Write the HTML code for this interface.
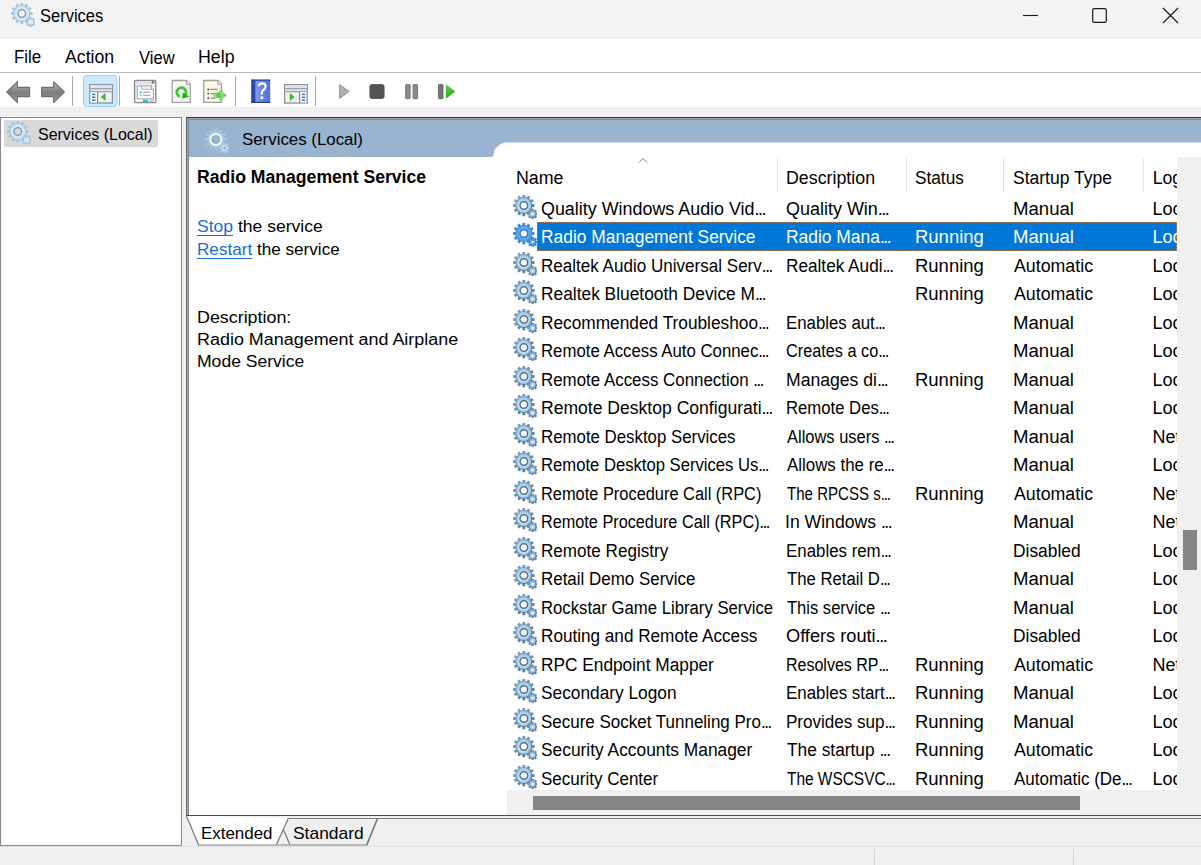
<!DOCTYPE html>
<html><head><meta charset="utf-8">
<style>
*{margin:0;padding:0;box-sizing:border-box}
html,body{width:1201px;height:865px;overflow:hidden;background:#f0f0f0;font-family:"Liberation Sans",sans-serif;color:#000;position:relative}
.a{position:absolute}
.t{position:absolute;white-space:nowrap;font-size:17.2px;line-height:20px}
#title{left:0;top:0;width:1201px;height:39px;background:#f3f3f3}
#menu{left:0;top:39px;width:1201px;height:33px;background:#fff}
#menuline{left:0;top:72px;width:1201px;height:1px;background:#b9b9b9}
#tool{left:0;top:73px;width:1201px;height:34px;background:#fff}
.mi{font-size:17.4px;line-height:20px;top:47px}
#lp{left:0;top:117px;width:182px;height:729px;background:#fff;border:1px solid #838a95}
#frame{left:186px;top:117px;width:1015px;height:699px;background:#fff;border-top:1px solid #3a3a3a;border-left:1px solid #6b6b6b;border-bottom:1px solid #3c3c3c}
#frame2{left:187px;top:118px;width:1014px;height:697px;border-top:1px solid #a0a0a0;border-left:1px solid #a0a0a0}
#frame3{left:188px;top:119px;width:1013px;height:696px;border-top:1px solid #7f8b99;border-left:1px solid #7f8b99}
#hdr{left:189px;top:120px;width:1012px;height:37px;background:#99b4d1}
#wtab{left:494px;top:142.5px;width:707px;height:15.5px;background:#fff;border-top-left-radius:11px 14px}
.row{position:absolute;left:507px;width:670px;height:28.5px;font-size:18px;line-height:28.5px;white-space:nowrap;overflow:hidden}
.row span{position:absolute;top:0;transform-origin:0 0}
.el{font-style:normal;letter-spacing:-1.5px}
.gi{position:absolute;left:6px;top:0}
.selbg{position:absolute;left:537px;top:222px;width:640px;height:29px;background:#0078d7;border:1px dotted #a9876a}
.sel{color:#fff}
.c1{left:33.5px}.c2{left:279px}.c3{left:408px}.c4{left:505px}.c5{left:645px}
.hd{position:absolute;top:163px;font-size:17.3px;line-height:20px;white-space:nowrap}
.sep{position:absolute;top:158px;width:1px;height:35px;background:#e5e5e5}
#vs{left:1177px;top:157px;width:24px;height:658px;background:#f0f0f0}
#vthumb{left:1183px;top:530px;width:14px;height:40px;background:#858585}
#hs{left:507px;top:790px;width:694px;height:25px;background:#f0f0f0}
#hthumb{left:533px;top:796px;width:547px;height:14px;background:#858585}
.dt{position:absolute;font-size:17.3px;line-height:22.4px;white-space:nowrap;left:197px}
.lnk{color:#1a6dd4;text-decoration:underline;text-decoration-skip-ink:none;text-underline-offset:2.5px}
#status{left:0;top:846px;width:1201px;height:1px;background:#e2e2e2}
.ssep{position:absolute;top:849px;width:1px;height:16px;background:#d5d5d5}
.tx{position:absolute;white-space:nowrap;line-height:40px;height:40px;transform-origin:0 0}

</style></head><body>
<svg width="0" height="0" style="position:absolute">
<defs>
<linearGradient id="tg" x1="0" y1="0" x2="0.8" y2="1"><stop offset="0" stop-color="#86a8c9"/><stop offset="1" stop-color="#56789c"/></linearGradient>
<radialGradient id="rg" cx="0.45" cy="0.55" r="0.55"><stop offset="0.5" stop-color="#d6f1fb"/><stop offset="1" stop-color="#a5cde6"/></radialGradient>
<symbol id="g" viewBox="0 0 24 24">
<path d="M9.29,2.13 L9.39,-0.21 L12.21,-0.21 L12.31,2.13 L13.68,2.50 L14.93,0.52 L17.37,1.93 L16.29,4.01 L17.29,5.01 L19.37,3.93 L20.78,6.37 L18.80,7.62 L19.17,8.99 L21.51,9.09 L21.51,11.91 L19.17,12.01 L18.80,13.38 L20.78,14.63 L19.37,17.07 L17.29,15.99 L16.29,16.99 L17.37,19.07 L14.93,20.48 L13.68,18.50 L12.31,18.87 L12.21,21.21 L9.39,21.21 L9.29,18.87 L7.92,18.50 L6.67,20.48 L4.23,19.07 L5.31,16.99 L4.31,15.99 L2.23,17.07 L0.82,14.63 L2.80,13.38 L2.43,12.01 L0.09,11.91 L0.09,9.09 L2.43,8.99 L2.80,7.62 L0.82,6.37 L2.23,3.93 L4.31,5.01 L5.31,4.01 L4.23,1.93 L6.67,0.52 L7.92,2.50Z" fill="url(#tg)"/>
<circle cx="10.8" cy="10.5" r="5.7" fill="none" stroke="url(#rg)" stroke-width="3.4"/>
<circle cx="10.8" cy="10.5" r="3.8" fill="none" stroke="#55718f" stroke-width="1.4"/>
<circle cx="10.8" cy="10.5" r="3.0" style="fill:var(--hole,#fff)"/>
<path d="M18.52,15.05 L18.55,13.70 L20.65,13.70 L20.68,15.05 L21.63,15.44 L22.60,14.51 L24.09,16.00 L23.16,16.97 L23.55,17.92 L24.90,17.95 L24.90,20.05 L23.55,20.08 L23.16,21.03 L24.09,22.00 L22.60,23.49 L21.63,22.56 L20.68,22.95 L20.65,24.30 L18.55,24.30 L18.52,22.95 L17.57,22.56 L16.60,23.49 L15.11,22.00 L16.04,21.03 L15.65,20.08 L14.30,20.05 L14.30,17.95 L15.65,17.92 L16.04,16.97 L15.11,16.00 L16.60,14.51 L17.57,15.44Z" fill="url(#tg)"/>
<circle cx="19.6" cy="19" r="2.7" fill="#a9cbe3"/>
<circle cx="19.6" cy="19" r="1.1" style="fill:var(--hole,#fff)"/>
</symbol>
<symbol id="gs" viewBox="0 0 24 24">
<path d="M9.29,2.13 L9.39,-0.21 L12.21,-0.21 L12.31,2.13 L13.68,2.50 L14.93,0.52 L17.37,1.93 L16.29,4.01 L17.29,5.01 L19.37,3.93 L20.78,6.37 L18.80,7.62 L19.17,8.99 L21.51,9.09 L21.51,11.91 L19.17,12.01 L18.80,13.38 L20.78,14.63 L19.37,17.07 L17.29,15.99 L16.29,16.99 L17.37,19.07 L14.93,20.48 L13.68,18.50 L12.31,18.87 L12.21,21.21 L9.39,21.21 L9.29,18.87 L7.92,18.50 L6.67,20.48 L4.23,19.07 L5.31,16.99 L4.31,15.99 L2.23,17.07 L0.82,14.63 L2.80,13.38 L2.43,12.01 L0.09,11.91 L0.09,9.09 L2.43,8.99 L2.80,7.62 L0.82,6.37 L2.23,3.93 L4.31,5.01 L5.31,4.01 L4.23,1.93 L6.67,0.52 L7.92,2.50Z" fill="#3f8ad5"/>
<circle cx="10.8" cy="10.5" r="5.7" fill="none" stroke="#5ea5e4" stroke-width="3.4"/>
<circle cx="10.8" cy="10.5" r="3.8" fill="none" stroke="#3a7dc6" stroke-width="1.4"/>
<circle cx="10.8" cy="10.5" r="3.0" style="fill:var(--hole,#fff)"/>
<path d="M18.52,15.05 L18.55,13.70 L20.65,13.70 L20.68,15.05 L21.63,15.44 L22.60,14.51 L24.09,16.00 L23.16,16.97 L23.55,17.92 L24.90,17.95 L24.90,20.05 L23.55,20.08 L23.16,21.03 L24.09,22.00 L22.60,23.49 L21.63,22.56 L20.68,22.95 L20.65,24.30 L18.55,24.30 L18.52,22.95 L17.57,22.56 L16.60,23.49 L15.11,22.00 L16.04,21.03 L15.65,20.08 L14.30,20.05 L14.30,17.95 L15.65,17.92 L16.04,16.97 L15.11,16.00 L16.60,14.51 L17.57,15.44Z" fill="#3f8ad5"/>
<circle cx="19.6" cy="19" r="2.7" fill="#5a9fe0"/>
<circle cx="19.6" cy="19" r="1.1" style="fill:var(--hole,#fff)"/>
</symbol>
<symbol id="gl" viewBox="0 0 24 24">
<path d="M9.29,2.13 L9.39,-0.21 L12.21,-0.21 L12.31,2.13 L13.68,2.50 L14.93,0.52 L17.37,1.93 L16.29,4.01 L17.29,5.01 L19.37,3.93 L20.78,6.37 L18.80,7.62 L19.17,8.99 L21.51,9.09 L21.51,11.91 L19.17,12.01 L18.80,13.38 L20.78,14.63 L19.37,17.07 L17.29,15.99 L16.29,16.99 L17.37,19.07 L14.93,20.48 L13.68,18.50 L12.31,18.87 L12.21,21.21 L9.39,21.21 L9.29,18.87 L7.92,18.50 L6.67,20.48 L4.23,19.07 L5.31,16.99 L4.31,15.99 L2.23,17.07 L0.82,14.63 L2.80,13.38 L2.43,12.01 L0.09,11.91 L0.09,9.09 L2.43,8.99 L2.80,7.62 L0.82,6.37 L2.23,3.93 L4.31,5.01 L5.31,4.01 L4.23,1.93 L6.67,0.52 L7.92,2.50Z" fill="#a9c6df"/>
<circle cx="10.8" cy="10.5" r="5.7" fill="none" stroke="#cfe9f7" stroke-width="3.4"/>
<circle cx="10.8" cy="10.5" r="3.8" fill="none" stroke="#8197ae" stroke-width="1.3"/>
<circle cx="10.8" cy="10.5" r="3.0" style="fill:var(--hole,#fff)"/>
<path d="M18.52,15.05 L18.55,13.70 L20.65,13.70 L20.68,15.05 L21.63,15.44 L22.60,14.51 L24.09,16.00 L23.16,16.97 L23.55,17.92 L24.90,17.95 L24.90,20.05 L23.55,20.08 L23.16,21.03 L24.09,22.00 L22.60,23.49 L21.63,22.56 L20.68,22.95 L20.65,24.30 L18.55,24.30 L18.52,22.95 L17.57,22.56 L16.60,23.49 L15.11,22.00 L16.04,21.03 L15.65,20.08 L14.30,20.05 L14.30,17.95 L15.65,17.92 L16.04,16.97 L15.11,16.00 L16.60,14.51 L17.57,15.44Z" fill="#a9c6df"/>
<circle cx="19.6" cy="19" r="2.7" fill="#cfe9f7"/>
<circle cx="19.6" cy="19" r="1.1" style="fill:var(--hole,#fff)"/>
</symbol>
<symbol id="gb" viewBox="0 0 24 24">
<path d="M9.29,2.13 L9.39,-0.21 L12.21,-0.21 L12.31,2.13 L13.68,2.50 L14.93,0.52 L17.37,1.93 L16.29,4.01 L17.29,5.01 L19.37,3.93 L20.78,6.37 L18.80,7.62 L19.17,8.99 L21.51,9.09 L21.51,11.91 L19.17,12.01 L18.80,13.38 L20.78,14.63 L19.37,17.07 L17.29,15.99 L16.29,16.99 L17.37,19.07 L14.93,20.48 L13.68,18.50 L12.31,18.87 L12.21,21.21 L9.39,21.21 L9.29,18.87 L7.92,18.50 L6.67,20.48 L4.23,19.07 L5.31,16.99 L4.31,15.99 L2.23,17.07 L0.82,14.63 L2.80,13.38 L2.43,12.01 L0.09,11.91 L0.09,9.09 L2.43,8.99 L2.80,7.62 L0.82,6.37 L2.23,3.93 L4.31,5.01 L5.31,4.01 L4.23,1.93 L6.67,0.52 L7.92,2.50Z" fill="#aac3da"/>
<circle cx="10.8" cy="10.5" r="6.3" fill="#99b4d1"/>
<circle cx="10.8" cy="10.5" r="5.4" fill="none" stroke="#e2f5fc" stroke-width="2.6"/>
<circle cx="10.8" cy="10.5" r="3.9" fill="none" stroke="#8ea6bf" stroke-width="1"/>
<path d="M18.52,15.05 L18.55,13.70 L20.65,13.70 L20.68,15.05 L21.63,15.44 L22.60,14.51 L24.09,16.00 L23.16,16.97 L23.55,17.92 L24.90,17.95 L24.90,20.05 L23.55,20.08 L23.16,21.03 L24.09,22.00 L22.60,23.49 L21.63,22.56 L20.68,22.95 L20.65,24.30 L18.55,24.30 L18.52,22.95 L17.57,22.56 L16.60,23.49 L15.11,22.00 L16.04,21.03 L15.65,20.08 L14.30,20.05 L14.30,17.95 L15.65,17.92 L16.04,16.97 L15.11,16.00 L16.60,14.51 L17.57,15.44Z" fill="#b3c9de"/>
<circle cx="19.6" cy="19" r="2.9" fill="#c6dcec"/>
<circle cx="19.6" cy="19" r="1.4" fill="#99b4d1"/>
</symbol>
</defs></svg>

<div id="title" class="a"></div>
<div id="menu" class="a"></div>
<div id="menuline" class="a"></div>
<div id="tool" class="a"></div>
<svg class="a" style="left:0;top:0" width="1201" height="110" viewBox="0 0 1201 110">
<defs>
<linearGradient id="arr" x1="0" y1="0" x2="0" y2="1"><stop offset="0" stop-color="#b4b4b4"/><stop offset="0.55" stop-color="#7c7c7c"/><stop offset="1" stop-color="#a4a4a4"/></linearGradient>
<linearGradient id="bk" x1="0" y1="0" x2="1" y2="0"><stop offset="0" stop-color="#2c47a6"/><stop offset="0.22" stop-color="#2c47a6"/><stop offset="0.23" stop-color="#7f9de8"/><stop offset="1" stop-color="#4a6fd6"/></linearGradient>
<linearGradient id="grn" x1="0" y1="0" x2="0" y2="1"><stop offset="0" stop-color="#5ad04a"/><stop offset="1" stop-color="#2fa81f"/></linearGradient>
<linearGradient id="exg" x1="0" y1="0" x2="1" y2="0"><stop offset="0" stop-color="#6fd060" stop-opacity="0.5"/><stop offset="0.35" stop-color="#4cc23a"/><stop offset="0.7" stop-color="#86e676"/><stop offset="1" stop-color="#4cc23a"/></linearGradient>
</defs>
<!-- title gear -->
<use href="#gl" x="11" y="3" width="24" height="24" style="--hole:#f3f3f3"/>
<!-- window controls -->
<line x1="1023" y1="15.5" x2="1038" y2="15.5" stroke="#1a1a1a" stroke-width="1.1"/>
<rect x="1092.7" y="8.7" width="13.6" height="13.6" rx="1.6" fill="none" stroke="#1a1a1a" stroke-width="1.2"/>
<path d="M1163,8 L1178,23 M1178,8 L1163,23" stroke="#1a1a1a" stroke-width="1.2"/>
<!-- back/forward -->
<path d="M6.8,92 L17.4,81.6 L17.4,87.4 L29.6,87.4 L29.6,96.6 L17.4,96.6 L17.4,102.6 Z" fill="url(#arr)" stroke="#6f6f6f" stroke-width="1.1" stroke-linejoin="round"/>
<path d="M64.4,92 L53.6,81.6 L53.6,87.4 L41.6,87.4 L41.6,96.6 L53.6,96.6 L53.6,102.6 Z" fill="url(#arr)" stroke="#6f6f6f" stroke-width="1.1" stroke-linejoin="round"/>
<!-- separators -->
<rect x="72" y="76" width="1" height="30" fill="#a9a9a9"/>
<rect x="119" y="76" width="1" height="30" fill="#a9a9a9"/>
<rect x="235" y="76" width="1" height="30" fill="#a9a9a9"/>
<rect x="315" y="76" width="1" height="30" fill="#a9a9a9"/>
<!-- highlighted button -->
<rect x="83.5" y="75.5" width="33.5" height="31" rx="3" fill="#cce8ff" stroke="#99d1ff" stroke-width="1"/>
<!-- show/hide console tree icon -->
<g>
<rect x="89.8" y="84.6" width="22.6" height="18.4" fill="#f2f2f2" stroke="#8b9099" stroke-width="1.3"/>
<rect x="90.5" y="85.3" width="21.2" height="3" fill="#dfe3ea"/>
<rect x="90.5" y="88.3" width="21.2" height="1.2" fill="#7d8797"/>
<rect x="90.5" y="89.6" width="21.2" height="1.6" fill="#e4e7ec"/>
<rect x="90.5" y="91.2" width="21.2" height="1" fill="#8b9099"/>
<rect x="90.5" y="92.2" width="6.5" height="10.2" fill="#fafafa"/>
<rect x="97" y="92" width="1.2" height="11" fill="#7d8797"/>
<rect x="92" y="93.6" width="3.4" height="1.6" fill="#3c7fd0"/>
<rect x="92" y="96.5" width="3.4" height="1.6" fill="#3c7fd0"/>
<rect x="92" y="99.4" width="3.4" height="1.6" fill="#3c7fd0"/>
<path d="M105.6,93 L105.6,101 L100.8,97 Z" fill="#3fb62e"/>
</g>
<!-- properties icon -->
<g>
<rect x="134.6" y="80.4" width="21.2" height="22.2" rx="1.2" fill="#f4f4f4" stroke="#8a8a8a" stroke-width="1.4"/>
<rect x="135.5" y="81.3" width="19.4" height="2.8" fill="#dbe1e8"/>
<rect x="151.8" y="81.2" width="2.4" height="2.3" fill="#5c7190"/>
<path d="M137.3,85.9 L151.6,85.9 L151.6,89.2 L153.4,89.2 L153.4,98.7 L137.3,98.7 Z" fill="#fff" stroke="#a3a7b2" stroke-width="1.1"/>
<path d="M141.7,86 L141.7,89.2 L151.6,89.2" fill="none" stroke="#a3a7b2" stroke-width="1"/>
<rect x="142.6" y="86.6" width="3.8" height="1.9" fill="#e8ebf0"/>
<rect x="147.4" y="86.6" width="3.6" height="1.9" fill="#e8ebf0"/>
<circle cx="140.7" cy="92.3" r="1" fill="#19b4f0"/>
<circle cx="140.7" cy="95.3" r="0.9" fill="#9a9a9a"/>
<rect x="143.2" y="91.7" width="7" height="1.2" fill="#a7a7a7"/>
<rect x="143.2" y="94.7" width="7" height="1.2" fill="#a7a7a7"/>
<rect x="143" y="99.6" width="5" height="2.4" fill="#19c0f5"/>
<rect x="149" y="99.8" width="4.5" height="2" fill="#c4c4c4"/>
</g>
<!-- refresh doc -->
<g>
<path d="M172.2,80.5 L186.5,80.5 L190.3,84.3 L190.3,102.4 L172.2,102.4 Z" fill="#f6f6f6" stroke="#a2a2a2" stroke-width="1.3"/>
<path d="M186.3,80.6 L186.3,84.5 L190.2,84.5" fill="#e0e0e0" stroke="#a9a9a9" stroke-width="1"/>
<path d="M179.7,96.6 A4.6,4.6 0 1 1 184.6,95.6" fill="none" stroke="#3fc52f" stroke-width="2.8"/>
<path d="M182.6,92.6 L189.4,96.6 L182.4,98.8 Z" fill="#1fb412"/>
</g>
<!-- export list -->
<g>
<path d="M203.7,80.5 L218,80.5 L221.6,84.1 L221.6,102.4 L203.7,102.4 Z" fill="#fcf7e3" stroke="#a0a0a0" stroke-width="1.3"/>
<path d="M217.8,80.6 L217.8,84.3 L221.5,84.3" fill="#e8e8e8" stroke="#a8a8a8" stroke-width="1"/>
<circle cx="208.2" cy="89.3" r="0.9" fill="#333"/>
<circle cx="208.2" cy="93.6" r="0.9" fill="#333"/>
<circle cx="208.2" cy="98.1" r="0.9" fill="#333"/>
<rect x="210.4" y="88.8" width="7.3" height="1.1" fill="#7e7ea6"/>
<rect x="210.4" y="93.1" width="5" height="1.1" fill="#7e7ea6"/>
<rect x="210.4" y="97.6" width="5" height="1.1" fill="#7e7ea6"/>
<path d="M213.4,92.6 L219.5,92.6 L219.5,89.2 L226.8,95.2 L219.5,101.2 L219.5,97.8 L213.4,97.8 Z" fill="url(#exg)"/>
</g>
<!-- help book -->
<g>
<rect x="251.2" y="79.6" width="19" height="23.4" fill="url(#bk)"/>
<rect x="251.2" y="79.6" width="19" height="1.2" fill="#2446b4"/>
<rect x="251.2" y="101.8" width="19" height="1.2" fill="#263f8c"/>
<path d="M258.8,86.2 Q259,83.4 262.2,83.4 Q265.6,83.4 265.6,86.4 Q265.6,88.6 263.4,90 Q261.8,91 261.8,93.2 L261.8,94.4" fill="none" stroke="#fff" stroke-width="2.1"/>
<rect x="260.6" y="96.4" width="2.6" height="2.5" fill="#fff"/>
</g>
<!-- action pane icon -->
<g>
<rect x="284.6" y="84.6" width="22.6" height="18.4" fill="#f2f2f2" stroke="#8b9099" stroke-width="1.3"/>
<rect x="285.3" y="85.3" width="21.2" height="3" fill="#dfe3ea"/>
<rect x="285.3" y="88.3" width="21.2" height="1.2" fill="#7d8797"/>
<rect x="285.3" y="89.6" width="21.2" height="1.6" fill="#e4e7ec"/>
<rect x="285.3" y="91.2" width="21.2" height="1" fill="#8b9099"/>
<rect x="299.6" y="92.2" width="6.5" height="10.2" fill="#fafafa"/>
<rect x="299" y="92" width="1.2" height="11" fill="#7d8797"/>
<rect x="301.8" y="93.6" width="3.4" height="1.6" fill="#3c7fd0"/>
<rect x="301.8" y="96.5" width="3.4" height="1.6" fill="#3c7fd0"/>
<rect x="301.8" y="99.4" width="3.4" height="1.6" fill="#3c7fd0"/>
<path d="M289.8,93 L289.8,101 L294.6,97 Z" fill="#3fb62e"/>
</g>
<!-- play stop pause restart -->
<path d="M339.6,84.6 L349.2,91.5 L339.6,98.4 Z" fill="#b0b0b0" stroke="#8c8c8c" stroke-width="0.9" stroke-linejoin="round"/>
<rect x="369.9" y="84.6" width="14.2" height="13.9" rx="2" fill="#535353" stroke="#4a4a4a" stroke-width="0.8"/>
<rect x="405.6" y="84.5" width="4.6" height="14.2" rx="0.8" fill="#8a8a8a" stroke="#6c6c6c" stroke-width="0.8"/>
<rect x="413" y="84.5" width="4.6" height="14.2" rx="0.8" fill="#8a8a8a" stroke="#6c6c6c" stroke-width="0.8"/>
<rect x="438.4" y="84.5" width="4.6" height="14.2" rx="0.8" fill="#757575" stroke="#5e5e5e" stroke-width="0.8"/>
<path d="M445.9,84.2 L455.5,91.5 L445.9,98.8 Z" fill="url(#grn)"/>
</svg>


<div id="lp" class="a"></div>
<div class="a" style="left:4px;top:120px;width:154px;height:26.5px;background:#d9d9d9;border-radius:2px"></div>
<svg class="a" style="left:6.5px;top:121px;--hole:#d9d9d9" width="24" height="24"><use href="#gl"/></svg>

<div id="frame" class="a"></div>
<div id="frame2" class="a"></div>
<div id="frame3" class="a"></div>
<div id="hdr" class="a"></div>
<svg class="a" style="left:480px;top:140px" width="721" height="20" viewBox="480 140 721 20"><path d="M492,157.4 L493.6,155.2 L494.2,150.2 L496.6,147.6 L499.6,144.4 L504.6,142.4 L1201,142.4 L1201,157.4 Z" fill="#fff"/></svg>
<svg class="a" style="left:205px;top:128.5px" width="24" height="24"><use href="#gb"/></svg>

<svg class="a" style="left:638px;top:157px" width="10" height="7"><path d="M1,5.5 L5,1.5 L9,5.5" fill="none" stroke="#808080" stroke-width="1"/></svg>
<div class="sep" style="left:777px"></div>
<div class="sep" style="left:906px"></div>
<div class="sep" style="left:1003px"></div>
<div class="sep" style="left:1143px"></div>
<div id="vs" class="a"></div>
<div id="vthumb" class="a"></div>
<div id="hs" class="a"></div>
<div id="hthumb" class="a"></div>

<svg class="a" style="left:0;top:800px" width="1201" height="65" viewBox="0 800 1201 65">
<rect x="186" y="816" width="1015" height="30" fill="#f0f0f0"/>
<path d="M278.6,818.5 L377.4,818.5 L366.4,845 L290,845 Z" fill="#f0f0f0"/>
<line x1="288" y1="818.5" x2="1201" y2="818.5" stroke="#7d7d7d" stroke-width="1"/>
<path d="M377.6,818.2 L366.6,845.4" stroke="#767676" stroke-width="1.6"/>
<path d="M283.6,830 L290,845" stroke="#6e6e6e" stroke-width="1.1"/>
<path d="M186,815.5 L198.6,845 L276.3,845 L288.3,818" fill="#fff"/>
<path d="M186.5,816 L198.6,845" stroke="#6b6b6b" stroke-width="1.1"/>
<path d="M276.3,845 L288.3,818.3" stroke="#6e6e6e" stroke-width="1.1"/>
<line x1="198" y1="845" x2="367" y2="845" stroke="#a8a8a8" stroke-width="1.5"/>
<line x1="186" y1="815.5" x2="1201" y2="815.5" stroke="#4c4c4c" stroke-width="1"/>
</svg>

<div id="status" class="a"></div>
<div class="ssep" style="left:874px"></div>
<div class="ssep" style="left:1073px"></div>
<div class="tx" style="left:39.88px;top:-4.20px;font-size:18px;font-weight:normal;transform:scaleX(0.9162)">Services</div>
<div class="tx" style="left:14.04px;top:36.80px;font-size:17.5px;font-weight:normal;transform:scaleX(0.9630)">File</div>
<div class="tx" style="left:65.00px;top:37.30px;font-size:17.5px;font-weight:normal;transform:scaleX(1.0104)">Action</div>
<div class="tx" style="left:139.00px;top:37.50px;font-size:17.5px;font-weight:normal;transform:scaleX(0.9474)">View</div>
<div class="tx" style="left:198.49px;top:36.80px;font-size:17.5px;font-weight:normal;transform:scaleX(1.0147)">Help</div>
<div class="tx" style="left:37.73px;top:113.50px;font-size:16.4px;font-weight:normal;transform:scaleX(0.9750)">Services (Local)</div>
<div class="tx" style="left:241.72px;top:118.70px;font-size:17.3px;font-weight:normal;transform:scaleX(0.9754)">Services (Local)</div>
<div class="tx" style="left:196.89px;top:157.20px;font-size:17.5px;font-weight:bold;transform:scaleX(1.0066)">Radio Management Service</div>
<div class="tx" style="left:196.89px;top:205.80px;font-size:17.3px;font-weight:normal;transform:scaleX(1.0148)"><span class="lnk">Stop</span> the service</div>
<div class="tx" style="left:196.91px;top:228.60px;font-size:17.3px;font-weight:normal;transform:scaleX(0.9909)"><span class="lnk">Restart</span> the service</div>
<div class="tx" style="left:197.17px;top:296.50px;font-size:17.3px;font-weight:normal;transform:scaleX(1.0337)">Description:</div>
<div class="tx" style="left:197.16px;top:318.60px;font-size:17.3px;font-weight:normal;transform:scaleX(1.0376)">Radio Management and Airplane</div>
<div class="tx" style="left:197.18px;top:341.20px;font-size:17.3px;font-weight:normal;transform:scaleX(1.0154)">Mode Service</div>
<div class="tx" style="left:516.49px;top:157.80px;font-size:17.6px;font-weight:normal;transform:scaleX(1.0111)">Name</div>
<div class="tx" style="left:785.99px;top:157.60px;font-size:17.6px;font-weight:normal;transform:scaleX(1.0116)">Description</div>
<div class="tx" style="left:915.02px;top:158.00px;font-size:17.6px;font-weight:normal;transform:scaleX(0.9792)">Status</div>
<div class="tx" style="left:1012.51px;top:157.80px;font-size:17.6px;font-weight:normal;transform:scaleX(0.9949)">Startup Type</div>
<div class="tx" style="left:201.30px;top:814.00px;font-size:17.0px;font-weight:normal;transform:scaleX(0.9957)">Extended</div>
<div class="tx" style="left:292.68px;top:814.00px;font-size:17.0px;font-weight:normal;transform:scaleX(1.0239)">Standard</div>
<div class="a" style="left:1143px;top:150px;width:34px;height:45px;overflow:hidden"><div class="tx" style="left:9.70px;top:7.80px;font-size:17.6px">Log On As</div></div>

<div class="selbg"></div><div class="row" style="top:194.5px"><svg class="gi" width="24" height="24"><use href="#g"/></svg><span style="left:33.51px;transform:scaleX(0.9942)">Quality Windows Audio Vid<i class="el">...</i></span><span style="left:279.00px;transform:scaleX(0.9980)">Quality Win<i class="el">...</i></span><span style="left:505.67px;transform:scaleX(1.0333)">Manual</span><span style="left:645.50px;transform:scaleX(1.0000)">Loc</span></div><div class="row sel" style="top:223.0px"><svg class="gi" width="24" height="24"><use href="#gs"/></svg><span style="left:33.53px;transform:scaleX(0.9659)">Radio Management Service</span><span style="left:279.03px;transform:scaleX(0.9673)">Radio Mana<i class="el">...</i></span><span style="left:407.57px;transform:scaleX(1.0262)">Running</span><span style="left:505.67px;transform:scaleX(1.0333)">Manual</span><span style="left:645.50px;transform:scaleX(1.0000)">Loc</span></div><div class="row" style="top:251.5px"><svg class="gi" width="24" height="24"><use href="#g"/></svg><span style="left:33.55px;transform:scaleX(0.9473)">Realtek Audio Universal Serv<i class="el">...</i></span><span style="left:279.05px;transform:scaleX(0.9550)">Realtek Audi<i class="el">...</i></span><span style="left:407.57px;transform:scaleX(1.0262)">Running</span><span style="left:506.70px;transform:scaleX(0.9875)">Automatic</span><span style="left:645.50px;transform:scaleX(1.0000)">Loc</span></div><div class="row" style="top:280.0px"><svg class="gi" width="24" height="24"><use href="#g"/></svg><span style="left:33.54px;transform:scaleX(0.9634)">Realtek Bluetooth Device M<i class="el">...</i></span><span style="left:407.57px;transform:scaleX(1.0262)">Running</span><span style="left:506.70px;transform:scaleX(0.9875)">Automatic</span><span style="left:645.50px;transform:scaleX(1.0000)">Loc</span></div><div class="row" style="top:308.5px"><svg class="gi" width="24" height="24"><use href="#g"/></svg><span style="left:33.54px;transform:scaleX(0.9597)">Recommended Troubleshoo<i class="el">...</i></span><span style="left:279.07px;transform:scaleX(0.9333)">Enables aut<i class="el">...</i></span><span style="left:505.67px;transform:scaleX(1.0333)">Manual</span><span style="left:645.50px;transform:scaleX(1.0000)">Loc</span></div><div class="row" style="top:337.0px"><svg class="gi" width="24" height="24"><use href="#g"/></svg><span style="left:33.57px;transform:scaleX(0.9321)">Remote Access Auto Connec<i class="el">...</i></span><span style="left:279.10px;transform:scaleX(0.9045)">Creates a co<i class="el">...</i></span><span style="left:505.67px;transform:scaleX(1.0333)">Manual</span><span style="left:645.50px;transform:scaleX(1.0000)">Loc</span></div><div class="row" style="top:365.5px"><svg class="gi" width="24" height="24"><use href="#g"/></svg><span style="left:33.56px;transform:scaleX(0.9386)">Remote Access Connection <i class="el">...</i></span><span style="left:279.02px;transform:scaleX(0.9777)">Manages di<i class="el">...</i></span><span style="left:407.57px;transform:scaleX(1.0262)">Running</span><span style="left:505.67px;transform:scaleX(1.0333)">Manual</span><span style="left:645.50px;transform:scaleX(1.0000)">Loc</span></div><div class="row" style="top:394.0px"><svg class="gi" width="24" height="24"><use href="#g"/></svg><span style="left:33.52px;transform:scaleX(0.9754)">Remote Desktop Configurati<i class="el">...</i></span><span style="left:279.07px;transform:scaleX(0.9273)">Remote Des<i class="el">...</i></span><span style="left:505.67px;transform:scaleX(1.0333)">Manual</span><span style="left:645.50px;transform:scaleX(1.0000)">Loc</span></div><div class="row" style="top:422.5px"><svg class="gi" width="24" height="24"><use href="#g"/></svg><span style="left:33.57px;transform:scaleX(0.9348)">Remote Desktop Services</span><span style="left:280.00px;transform:scaleX(0.9145)">Allows users <i class="el">...</i></span><span style="left:505.67px;transform:scaleX(1.0333)">Manual</span><span style="left:645.50px;transform:scaleX(1.0000)">Net</span></div><div class="row" style="top:451.0px"><svg class="gi" width="24" height="24"><use href="#g"/></svg><span style="left:33.58px;transform:scaleX(0.9245)">Remote Desktop Services Us<i class="el">...</i></span><span style="left:280.00px;transform:scaleX(0.9386)">Allows the re<i class="el">...</i></span><span style="left:505.67px;transform:scaleX(1.0333)">Manual</span><span style="left:645.50px;transform:scaleX(1.0000)">Loc</span></div><div class="row" style="top:479.5px"><svg class="gi" width="24" height="24"><use href="#g"/></svg><span style="left:33.59px;transform:scaleX(0.9104)">Remote Procedure Call (RPC)</span><span style="left:280.00px;transform:scaleX(0.8374)">The RPCSS s<i class="el">...</i></span><span style="left:407.57px;transform:scaleX(1.0262)">Running</span><span style="left:506.70px;transform:scaleX(0.9875)">Automatic</span><span style="left:645.50px;transform:scaleX(1.0000)">Net</span></div><div class="row" style="top:508.0px"><svg class="gi" width="24" height="24"><use href="#g"/></svg><span style="left:33.60px;transform:scaleX(0.9028)">Remote Procedure Call (RPC)<i class="el">...</i></span><span style="left:278.04px;transform:scaleX(0.9785)">In Windows <i class="el">...</i></span><span style="left:505.67px;transform:scaleX(1.0333)">Manual</span><span style="left:645.50px;transform:scaleX(1.0000)">Net</span></div><div class="row" style="top:536.5px"><svg class="gi" width="24" height="24"><use href="#g"/></svg><span style="left:33.55px;transform:scaleX(0.9489)">Remote Registry</span><span style="left:279.06px;transform:scaleX(0.9369)">Enables rem<i class="el">...</i></span><span style="left:505.74px;transform:scaleX(0.9647)">Disabled</span><span style="left:645.50px;transform:scaleX(1.0000)">Loc</span></div><div class="row" style="top:565.0px"><svg class="gi" width="24" height="24"><use href="#g"/></svg><span style="left:33.56px;transform:scaleX(0.9414)">Retail Demo Service</span><span style="left:280.00px;transform:scaleX(0.9279)">The Retail D<i class="el">...</i></span><span style="left:505.67px;transform:scaleX(1.0333)">Manual</span><span style="left:645.50px;transform:scaleX(1.0000)">Loc</span></div><div class="row" style="top:593.5px"><svg class="gi" width="24" height="24"><use href="#g"/></svg><span style="left:33.57px;transform:scaleX(0.9282)">Rockstar Game Library Service</span><span style="left:280.00px;transform:scaleX(0.9196)">This service <i class="el">...</i></span><span style="left:505.67px;transform:scaleX(1.0333)">Manual</span><span style="left:645.50px;transform:scaleX(1.0000)">Loc</span></div><div class="row" style="top:622.0px"><svg class="gi" width="24" height="24"><use href="#g"/></svg><span style="left:33.55px;transform:scaleX(0.9522)">Routing and Remote Access</span><span style="left:278.99px;transform:scaleX(1.0102)">Offers routi<i class="el">...</i></span><span style="left:505.74px;transform:scaleX(0.9647)">Disabled</span><span style="left:645.50px;transform:scaleX(1.0000)">Loc</span></div><div class="row" style="top:650.5px"><svg class="gi" width="24" height="24"><use href="#g"/></svg><span style="left:33.54px;transform:scaleX(0.9598)">RPC Endpoint Mapper</span><span style="left:279.11px;transform:scaleX(0.8886)">Resolves RP<i class="el">...</i></span><span style="left:407.57px;transform:scaleX(1.0262)">Running</span><span style="left:506.70px;transform:scaleX(0.9875)">Automatic</span><span style="left:645.50px;transform:scaleX(1.0000)">Net</span></div><div class="row" style="top:679.0px"><svg class="gi" width="24" height="24"><use href="#g"/></svg><span style="left:33.54px;transform:scaleX(0.9604)">Secondary Logon</span><span style="left:279.06px;transform:scaleX(0.9391)">Enables start<i class="el">...</i></span><span style="left:407.57px;transform:scaleX(1.0262)">Running</span><span style="left:505.67px;transform:scaleX(1.0333)">Manual</span><span style="left:645.50px;transform:scaleX(1.0000)">Loc</span></div><div class="row" style="top:707.5px"><svg class="gi" width="24" height="24"><use href="#g"/></svg><span style="left:33.56px;transform:scaleX(0.9432)">Secure Socket Tunneling Pro<i class="el">...</i></span><span style="left:279.05px;transform:scaleX(0.9474)">Provides sup<i class="el">...</i></span><span style="left:407.57px;transform:scaleX(1.0262)">Running</span><span style="left:505.67px;transform:scaleX(1.0333)">Manual</span><span style="left:645.50px;transform:scaleX(1.0000)">Loc</span></div><div class="row" style="top:736.0px"><svg class="gi" width="24" height="24"><use href="#g"/></svg><span style="left:33.54px;transform:scaleX(0.9642)">Security Accounts Manager</span><span style="left:280.00px;transform:scaleX(0.9626)">The startup <i class="el">...</i></span><span style="left:407.57px;transform:scaleX(1.0262)">Running</span><span style="left:506.70px;transform:scaleX(0.9875)">Automatic</span><span style="left:645.50px;transform:scaleX(1.0000)">Loc</span></div><div class="row" style="top:764.5px"><svg class="gi" width="24" height="24"><use href="#g"/></svg><span style="left:33.56px;transform:scaleX(0.9447)">Security Center</span><span style="left:280.00px;transform:scaleX(0.8571)">The WSCSVC<i class="el">...</i></span><span style="left:407.57px;transform:scaleX(1.0262)">Running</span><span style="left:506.70px;transform:scaleX(0.9432)">Automatic (De<i class="el">...</i></span><span style="left:645.50px;transform:scaleX(1.0000)">Loc</span></div>
</body></html>
